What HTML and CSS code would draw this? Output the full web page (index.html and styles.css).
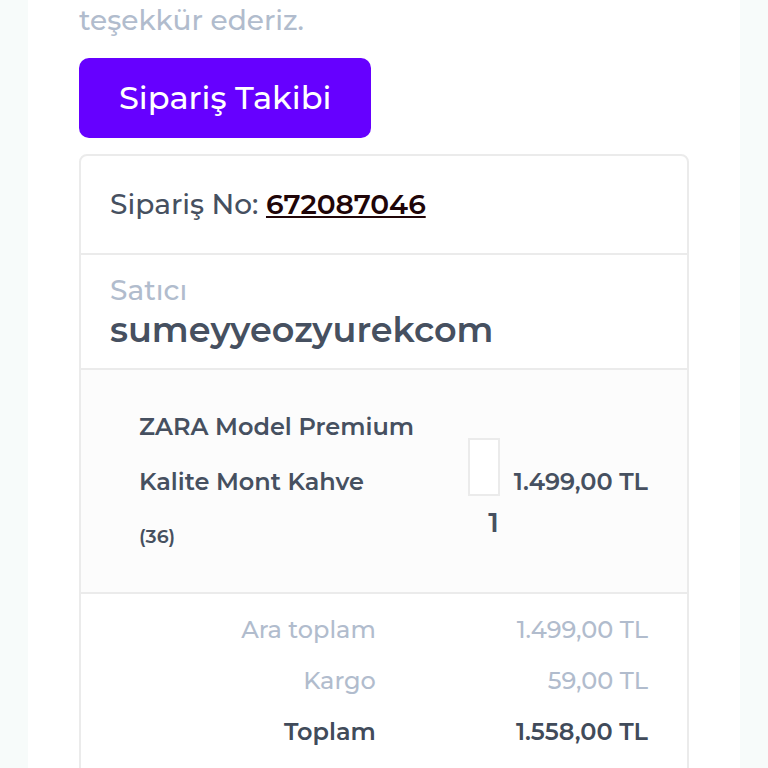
FILE: index.html
```
<!DOCTYPE html>
<html lang="tr">
<head>
<meta charset="utf-8">
<meta name="viewport" content="width=device-width, initial-scale=1">
<title>Sipariş Takibi</title>
<link rel="stylesheet" href="styles.css">
</head>
<body>
<main class="sheet">
  <p class="thanks">teşekkür ederiz.</p>
  <a class="track" href="#siparis">Sipariş Takibi</a>
  <section class="order" id="siparis">
    <p class="order-no">Sipariş No: <a href="#siparis">672087046</a></p>
    <div class="seller">
      <p class="seller-label">Satıcı</p>
      <h2 class="seller-name">sumeyyeozyurekcom</h2>
    </div>
    <div class="item">
      <p class="item-name">ZARA Model Premium Kalite Mont Kahve <small>(36)</small></p>
      <div class="item-count">
        <span class="thumb"></span>
        <span class="quantity">1</span>
      </div>
      <p class="item-price">1.499,00 TL</p>
    </div>
    <table class="totals">
      <tbody>
        <tr><th scope="row">Ara toplam</th><td>1.499,00 TL</td></tr>
        <tr><th scope="row">Kargo</th><td>59,00 TL</td></tr>
        <tr class="grand"><th scope="row">Toplam</th><td>1.558,00 TL</td></tr>
      </tbody>
    </table>
  </section>
</main>
</body>
</html>
```
FILE: styles.css
```
* {
  box-sizing: border-box;
}

html {
  overflow: hidden;
}

body {
  margin: 0;
  padding: 0 28px;
  background: #f7fbfa;
  color: #465060;
  font-family: Montserrat, "Open Sans", "Liberation Sans", sans-serif;
  font-size: 24px;
  font-weight: 600;
}

p,
h2 {
  margin: 0;
}

.sheet {
  min-height: 100vh;
  padding: 0 51px;
  background: #fff;
}

.thanks {
  padding-bottom: 18px;
  color: #b1bccd;
  font-size: 28px;
  font-weight: 500;
  line-height: 40px;
}

.track {
  display: inline-block;
  padding: 20px 40px;
  border-radius: 10px;
  background: #6600ff;
  color: #fff;
  font-size: 32px;
  font-weight: 500;
  line-height: 40px;
  text-decoration: none;
  vertical-align: top;
}

.order {
  margin-top: 16px;
  border: 2px solid #ebebeb;
  border-radius: 8px 8px 0 0;
}

.order-no {
  padding: 28px 29px 29px;
  font-size: 28px;
  font-weight: 500;
  line-height: 40px;
}

.order-no a {
  color: #200508;
  font-weight: 600;
}

.seller {
  padding: 15px 29px 18px;
  border-top: 2px solid #ebebeb;
}

.seller-label {
  color: #b1bccd;
  font-size: 28px;
  font-weight: 500;
  line-height: 40px;
}

.seller-name {
  font-size: 35px;
  font-weight: 600;
  line-height: 40px;
}

.item {
  display: grid;
  grid-template-columns: 1fr auto auto;
  align-items: center;
  gap: 14px;
  padding: 29px 39px 28px 58px;
  border-block: 2px solid #ebebeb;
  background: #fcfcfc;
}

.item-name {
  max-width: 280px;
  line-height: 55px;
}

.item-name small {
  display: block;
  font-size: 19px;
}

.item-count {
  display: grid;
  justify-items: end;
  gap: 8px;
  padding-top: 14px;
}

.thumb {
  width: 32px;
  height: 58px;
  border: 2px solid #ebebeb;
  background: #fff;
}

.quantity {
  padding-right: 1px;
  font-size: 28px;
  line-height: 36px;
}

.totals {
  width: 100%;
  padding: 10px 39px 40px 0;
  border-spacing: 0;
  color: #b1bccd;
  line-height: 51px;
  text-align: right;
}

.totals th,
.totals td {
  width: 48%;
  padding: 0;
  font-weight: 500;
}

.totals th {
  width: 52%;
}

.totals .grand th,
.totals .grand td {
  color: #414b5a;
  font-weight: 600;
}
```
